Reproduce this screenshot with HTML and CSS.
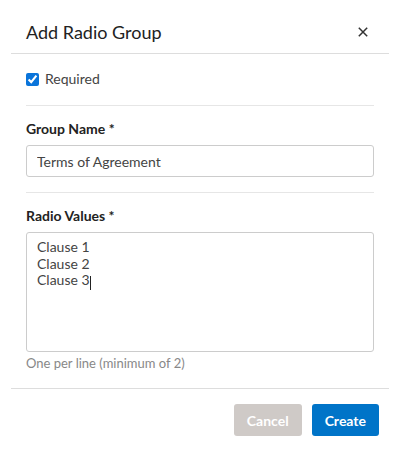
FILE: index.html
```html
<!DOCTYPE html>
<html lang="en">

<head>
    <meta charset="UTF-8">
    <meta name="viewport" content="width=device-width, initial-scale=1.0">
    <title>Add Radio Group</title>
    <link rel="stylesheet" href="styles.css">
</head>

<body>
    <div class="modal">
        <div class="modal-header">
            <h2 class="modal-title">Add Radio Group</h2>
            <button type="button" class="close-btn" aria-label="Close">
                <svg width="10" height="10" viewBox="0 0 10 10">
                    <path d="M0.8 0.8 L9.2 9.2 M9.2 0.8 L0.8 9.2" stroke="#333" stroke-width="1.5" fill="none" />
                </svg>
            </button>
        </div>

        <div class="modal-body">
            <div class="section">
                <label class="check-label">
                    <input type="checkbox" checked> Required
                </label>
            </div>

            <div class="section">
                <label class="field-label" for="group-name">Group Name *</label>
                <input type="text" id="group-name" class="text-input" value="Terms of Agreement">
            </div>

            <div class="section last">
                <label class="field-label" for="radio-values">Radio Values *</label>
                <div class="area-wrap">
                    <textarea id="radio-values" class="text-area">Clause 1
Clause 2
Clause 3</textarea>
                    
                    <span class="caret"></span>
                </div>
                <div class="hint">One per line (minimum of 2)</div>
            </div>
        </div>

        <div class="modal-footer">
            <button type="button" class="btn btn-cancel">Cancel</button>
            <button type="button" class="btn btn-create">Create</button>
        </div>
    </div>
</body>

</html>
```

FILE: styles.css
```css
body {
    margin: 0;
    background: #fff;
    font-family: Lato, "Open Sans", sans-serif;
    color: #333;
}

.modal {
    width: 400px;
}

.modal-header {
    display: flex;
    align-items: center;
    justify-content: space-between;
    height: 54px;
    box-sizing: border-box;
    margin: 0 11px;
    padding: 21px 15px 11px;
    border-bottom: 1px solid #ddd;
}

.modal-title {
    margin: 0;
    font-size: 18px;
    line-height: 22px;
    font-weight: 400;
    color: #222;
}

.close-btn {
    border: none;
    background: none;
    padding: 0;
    margin-right: 6px;
    display: flex;
    cursor: pointer;
}

.modal-body {
    padding: 0 26px;
}

.section {
    border-bottom: 1px solid #e6e6e6;
    padding: 15px 0;
}

.section:first-child {
    padding-bottom: 16px;
}

.section.last {
    border-bottom: none;
    padding-bottom: 17px;
}

.check-label {
    display: flex;
    align-items: center;
    gap: 6px;
    font-size: 14px;
    line-height: 20px;
    color: #444;
}

.check-label input {
    width: 13px;
    height: 13px;
    margin: 0;
    accent-color: #0a74da;
}

.field-label {
    display: block;
    font-size: 14px;
    font-weight: 700;
    line-height: 16px;
    color: #222;
    margin-bottom: 8px;
}

.text-input,
.text-area {
    display: block;
    width: 100%;
    box-sizing: border-box;
    border: 1px solid #ccc;
    border-radius: 3px;
    font-family: inherit;
    font-size: 14px;
    color: #444;
    padding: 0 10px;
    outline: none;
}

.text-input {
    height: 32px;
}

.area-wrap {
    position: relative;
}

.text-area {
    height: 120px;
    padding-top: 6px;
    line-height: 16.5px;
    resize: none;
}

.caret {
    position: absolute;
    left: 64px;
    top: 44px;
    width: 1px;
    height: 14px;
    background: #222;
}

.hint {
    font-size: 13px;
    line-height: 16px;
    color: #888;
    margin-top: 3px;
}

.modal-footer {
    display: flex;
    justify-content: flex-end;
    gap: 10px;
    margin: 0 11px;
    padding: 15px 10px;
    border-top: 1px solid #ddd;
}

.btn {
    border: none;
    border-radius: 3px;
    height: 32px;
    padding: 0 13px;
    font-family: inherit;
    font-size: 14px;
    font-weight: 700;
    color: #fff;
    cursor: pointer;
}

.btn-cancel {
    background: #cfcac7;
}

.btn-create {
    background: #0074c8;
}
```
